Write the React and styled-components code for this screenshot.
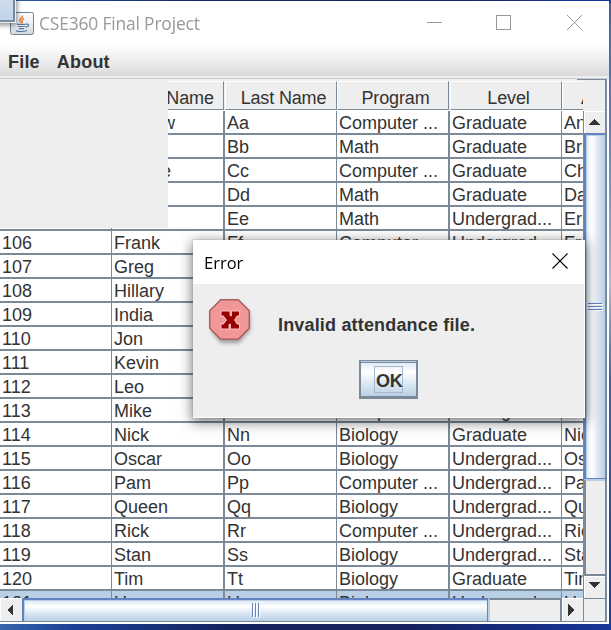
import React from "react";
import styled, { createGlobalStyle } from "styled-components";

const Global = createGlobalStyle`
  * { box-sizing: border-box; }
  body { margin: 0; overflow: hidden; font: 18px/22px "Liberation Sans", Arial, sans-serif; color: #333; }
`;
const slate = "#7a8a99";
const blue = "#6382bf";
const steel = "linear-gradient(#dae6f2, #fff 30%, #dce8f3 62%, #b8cfe5)";
const steelSide = "linear-gradient(90deg, #dae6f2, #fff 30%, #dce8f3 62%, #b8cfe5)";

const Desktop = styled.div`
  position: relative;
  width: 611px;
  height: 630px;
  padding: 1px 2px 0 0;
  overflow: hidden;
  background:
    linear-gradient(#4a5d9e, #5b7dc0 20%, #9cabd0 40%, #b0bbd6 45%, #3b62a5 60%, #183c9c 100%) right / 3px 624px no-repeat,
    linear-gradient(90deg, #3965ac, #1b4096 12%, #14225c 38%, #14205c 65%, #17379a);
`;
const Frame = styled.div`
  display: flex;
  flex-direction: column;
  width: 609px;
  height: 623px;
  background: #fff;
`;
const TitleBar = styled.header`
  display: flex;
  align-items: center;
  height: 44px;
  flex: none;
  padding-left: 10px;
`;
const Title = styled.span`
  margin-left: 5px;
  width: 385px;
  color: #999;
  font: 18px/24px "Open Sans", sans-serif;
  letter-spacing: -0.15px;
  white-space: nowrap;
`;
const TitleText = styled.span`
  display: inline-block;
  transform: scaleX(${(p) => p.$scale});
  transform-origin: left;
`;
const WindowIcons = styled.svg`
  flex: none;
`;
const MenuBar = styled.nav`
  display: flex;
  gap: 17px;
  height: 31px;
  flex: none;
  padding: 6px 0 0 8px;
  font-weight: bold;
  letter-spacing: 0.2px;
  background: linear-gradient(#fff, #dadada);
`;
const Rule = styled.div`
  height: 3px;
  flex: none;
  background: linear-gradient(#eee 2px, #ccc 2px);
`;
const Pane = styled.main`
  position: relative;
  display: grid;
  grid-template-columns: 583px 24px;
  grid-template-rows: 32px 487px 24px;
  width: 607px;
  background: #eee;
`;
const HeaderView = styled.div`
  overflow: hidden;
  padding-top: 2px;
`;
const Columns = styled.div`
  display: grid;
  grid-template-columns: 112px 113px 112px 113px 112px 113px;
  width: 675px;
`;
const HeadCell = styled.div`
  height: 29px;
  margin-right: ${(p) => (p.$wide ? 1 : 0)}px;
  padding: 5px 0 0 ${(p) => p.$pad || 5}px;
  text-align: ${(p) => (p.$pad ? "left" : "center")};
  letter-spacing: -0.15px;
  border-top: 1px solid #fff;
  border-left: 1px solid #fff;
  border-right: 1px solid ${slate};
  border-bottom: 1px solid ${slate};
  box-shadow: 0 1px #fff;
`;
const Corner = styled.div`
  border-right: 2px solid ${slate};
  border-top: 1px solid ${slate};
  margin-left: -6px;
`;
const Viewport = styled.div`
  overflow: hidden;
  background: #fff;
`;
const Cell = styled.div`
  height: 24px;
  padding: 1px 0 0 2px;
  white-space: nowrap;
  overflow: hidden;
  border-bottom: 2px solid ${slate};
  border-right: ${(p) => p.$rule}px solid ${slate};
  background: ${(p) => (p.$selected ? "#b8cfe5" : "#fff")};
`;
const VBar = styled.div`
  display: grid;
  grid-template-rows: 22px 346px 1fr 24px;
  border-right: 2px solid ${slate};
  border-left: 1px solid ${slate};
`;
const HBar = styled.div`
  display: grid;
  grid-template-columns: 22px 466px 1fr 23px;
  border-bottom: 1px solid ${slate};
`;
const Arrow = styled.div`
  display: flex;
  align-items: center;
  justify-content: center;
  padding: 0 ${(p) => (p.$line === "left" ? 4 : 2)}px ${(p) => (p.$line === "top" ? 5 : 0)}px 0;
  border: 0 solid ${slate};
  border-left-width: ${(p) => (p.$line === "left" ? 2 : 0)}px;
  border-top-width: ${(p) => (p.$line === "top" ? 2 : 0)}px;
  box-shadow: inset 1px 1px #fff;
`;
const Track = styled.div`
  border-top: 2px solid ${(p) => (p.$flat ? slate : "#b8cfe5")};
  border-left: 2px solid ${(p) => (p.$flat ? "#b8cfe5" : slate)};
`;
const Thumb = styled.div`
  display: flex;
  align-items: center;
  justify-content: center;
  border: 2px solid ${blue};
  border-width: ${(p) => (p.$side ? "2px 0 1px 2px" : "2px 1px 0 2px")};
  box-shadow: inset 1px 1px #b8cfe5;
  background: ${(p) => (p.$side ? steelSide : steel)};
`;
const LowerCorner = styled.div`
  border: 0 solid ${slate};
  border-width: 1px 2px 1px 1px;
`;
const Patch = styled.div`
  position: absolute;
  left: 0;
  top: 0;
  width: 168px;
  height: 149px;
  background: #eee;
`;
const StrayButton = styled.div`
  position: absolute;
  left: -6px;
  top: -8px;
  width: 22px;
  height: 31px;
  border: 1px solid #e8f0f7;
  border-width: 0 1px 1px 0;
  background: linear-gradient(#d4e2ef, #bed3e7);
  box-shadow: inset -2px -2px ${slate}, 0 1px 5px 1px #0007;
`;
const Dialog = styled.section`
  position: absolute;
  left: 193px;
  top: 240px;
  width: 392px;
  height: 178px;
  border: 1px solid #fff;
  border-left: 0;
  background: #eee;
  box-shadow: 0 0 1px #888, 0 3px 12px 1px #0008;
`;
const DialogTitle = styled.div`
  display: flex;
  justify-content: space-between;
  height: 43px;
  padding: 10px 16px 0 11px;
  background: #fff;
  color: #000;
  font: 17px/24px "Open Sans", sans-serif;
`;
const CloseIcon = styled.svg`
  margin-top: 2px;
  stroke: #000;
  stroke-width: 1.1;
`;
const Message = styled.div`
  display: flex;
  padding: 13px 0 0 13px;
  height: 76px;
  font-weight: bold;
`;
const MessageText = styled.p`
  margin: 17px 0 0 21px;
  letter-spacing: 0.17px;
`;
const OkButton = styled.button`
  display: flex;
  align-items: center;
  justify-content: center;
  width: 59px;
  height: 39px;
  margin-left: 166px;
  padding: 0;
  border: 2px solid ${slate};
  border-top-width: 1px;
  box-shadow: inset 0 1px #b8cfe5, inset 0 2px ${slate}, inset 0 -1px ${slate}, inset 0 -2px #b8cfe5;
  background: ${steel};
  font: bold 18px/24px "Liberation Sans", Arial, sans-serif;
  color: #333;
`;
const Focus = styled.span`
  border: 1px solid #a3b8cc;
  height: 27px;
  width: 29px;
  padding: 3px 0 0 1px;
  line-height: 22px;
  letter-spacing: -0.2px;
`;

const rows = `101|Andrew|Aa|Computer ...|Graduate|Andrew
102|Bob|Bb|Math|Graduate|Brian
103|Charlie|Cc|Computer ...|Graduate|Charlie
104|Dan|Dd|Math|Graduate|Dan
105|Ed|Ee|Math|Undergrad...|Erin
106|Frank|Ff|Computer ...|Undergrad...|Frank
107|Greg|Gg|Biology|Graduate|Greg
108|Hillary|Hh|Biology|Graduate|Hillary
109|India|Ii|Biology|Graduate|India
110|Jon|Jj|Biology|Graduate|Jon
111|Kevin|Kk|Math|Graduate|Kevin
112|Leo|Ll|Math|Graduate|Leo
113|Mike|Mm|Computer ...|Undergrad...|Mike
114|Nick|Nn|Biology|Graduate|Nick
115|Oscar|Oo|Biology|Undergrad...|Oscar
116|Pam|Pp|Computer ...|Undergrad...|Pam
117|Queen|Qq|Biology|Undergrad...|Queen
118|Rick|Rr|Computer ...|Undergrad...|Rick
119|Stan|Ss|Biology|Undergrad...|Stan
120|Tim|Tt|Biology|Graduate|Tim
121|Uma|Uu|Biology|Undergrad...|Uma`.split("\n").map((r) => r.split("|"));

const Triangle = ({ d, w, h }) => (
  <svg width={w} height={h}><path d={d} fill="#333" shapeRendering="crispEdges" /></svg>
);
const Grip = ({ side }) => (
  <svg width="15" height="15" shapeRendering="crispEdges">
    <g transform={side ? "matrix(0 1 1 0 0 0)" : undefined}>
      {[4, 7, 10].map((x) => (
        <React.Fragment key={x}>
          <path d={`M${x + 1.5} 1v14`} stroke="#fff" />
          <path d={`M${x + 0.5} 0v14`} stroke={blue} />
        </React.Fragment>
      ))}
    </g>
  </svg>
);
const JavaIcon = () => (
  <svg width="24" height="23" viewBox="0 0 24 23" fill="none">
    <defs>
      <linearGradient id="tile" x2="0" y2="1"><stop stopColor="#fff" /><stop offset="1" stopColor="#d3dbe1" /></linearGradient>
    </defs>
    <rect x=".5" y=".5" width="23" height="22" rx="2" fill="url(#tile)" stroke="#708497" />
    <path d="M12.500 3.500c1 2-4 3.500-2.300 5.500 .8 1 1 1 .8 2M14 6.500c-3.500 1.500-1 2.500-2 4.500" stroke="#ed8040" strokeWidth="1.500" />
    <path d="M7 12.300h8.500M8 14.500h7M9 16.600h5M6 18.800q6 1.500 11-.3M16 12.200c4-.8 3 2.500-.5 3.200" stroke="#56799a" strokeWidth="1.200" />
  </svg>
);
const ErrorIcon = () => (
  <svg width="51" height="52" viewBox="0 0 51 52">
    <defs><filter id="soft" x="-30%" y="-30%" width="160%" height="160%"><feGaussianBlur stdDeviation="2" /></filter></defs>
    <path d="M15 6h18l11 11v16L33 46H15L6 35V17z" fill="#777" opacity=".7" filter="url(#soft)" />
    <path d="M14.700 2.700h17.600l11 11v17.600l-11 11H14.700l-11-11V13.700z" fill="#f09898" stroke="#a85f5f" strokeWidth="1.500" />
    <path d="M15.500 14.500h8v4l1.500 1 1-1v-4h7v4h-2l-3 4.500 3 4.500h2v4h-8v-4l-1-1-1.500 1v4h-7v-4h2l3.500-4.500-3.500-4.500h-2z" fill="#900" stroke="#ffc0c0" strokeWidth="2" paintOrder="stroke" />
  </svg>
);

export default function App() {
  return (
    <Desktop>
      <Global />
      <Frame>
        <TitleBar>
          <JavaIcon />
          <Title><TitleText $scale={0.965}>CSE360 Final Project</TitleText></Title>
          <WindowIcons width="160" height="18" fill="none" stroke="#999" shapeRendering="crispEdges">
            <path d="M3 8.500h15" />
            <rect x="72.500" y="1.500" width="14" height="14" />
            <path d="M143 1l15 15M158 1l-15 15" shapeRendering="auto" />
          </WindowIcons>
        </TitleBar>
        <MenuBar><span>File</span><span>About</span></MenuBar>
        <Rule />
        <Pane>
          <HeaderView>
            <Columns>
              {["Id", "First Name", "Last Name", "Program", "Level"].map((h, i) => (
                <HeadCell key={h} $wide={i % 2 === 1}>{h}</HeadCell>
              ))}
              <HeadCell $pad={18}>Advisor</HeadCell>
            </Columns>
          </HeaderView>
          <Corner />
          <Viewport>
            <Columns>
              {rows.map((r, i) => r.map((c, j) => (
                <Cell key={`${i}-${j}`} $rule={j % 2 ? 2 : 1} $selected={i === 20}>{c}</Cell>
              )))}
            </Columns>
          </Viewport>
          <VBar>
            <Arrow><Triangle w={12} h={6} d="M6 0L12 6H0z" /></Arrow>
            <Thumb $side><Grip side /></Thumb>
            <Track />
            <Arrow $line="top"><Triangle w={12} h={6} d="M0 0h12L6 6z" /></Arrow>
          </VBar>
          <HBar>
            <Arrow><Triangle w={6} h={12} d="M6 0v12L0 6z" /></Arrow>
            <Thumb><Grip /></Thumb>
            <Track $flat />
            <Arrow $line="left"><Triangle w={6} h={12} d="M0 0v12l6-6z" /></Arrow>
          </HBar>
          <LowerCorner />
          <Patch />
        </Pane>
      </Frame>
      <StrayButton />
      <Dialog>
        <DialogTitle>
          <TitleText $scale={0.97}>Error</TitleText>
          <CloseIcon width="16" height="16"><path d="M.5 .5l15 15M15.500 .5l-15 15" /></CloseIcon>
        </DialogTitle>
        <Message><ErrorIcon /><MessageText>Invalid attendance file.</MessageText></Message>
        <OkButton><Focus>OK</Focus></OkButton>
      </Dialog>
    </Desktop>
  );
}
